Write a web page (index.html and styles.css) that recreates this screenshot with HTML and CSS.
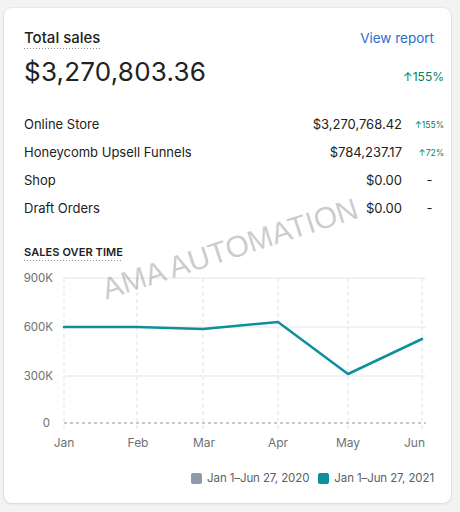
FILE: index.html
```html
<!DOCTYPE html>
<html>
<head>
<meta charset="utf-8">
<link rel="stylesheet" href="styles.css">
</head>
<body>
<div class="card">
  <div class="header">
    <span class="title dotted">Total sales</span>
    <a class="link">View report</a>
  </div>
  <div class="total">
    <span class="amount">$3,270,803.36</span>
    <span class="change big">↑155%</span>
  </div>
  <div class="rows">
    <div class="row"><span class="label">Online Store</span><span class="value">$3,270,768.42</span><span class="change small">↑155%</span></div>
    <div class="row"><span class="label">Honeycomb Upsell Funnels</span><span class="value">$784,237.17</span><span class="change small">↑72%</span></div>
    <div class="row"><span class="label">Shop</span><span class="value">$0.00</span><span class="dash">-</span></div>
    <div class="row"><span class="label">Draft Orders</span><span class="value">$0.00</span><span class="dash">-</span></div>
  </div>
  <div class="section"><span class="section-title dotted">SALES OVER TIME</span></div>
  <svg class="chart" width="428" height="200" viewBox="16 258 428 200">
    <g class="hgrid">
      <line x1="64" y1="277" x2="426" y2="277"/>
      <line x1="64" y1="326" x2="426" y2="326"/>
      <line x1="64" y1="375" x2="426" y2="375"/>
    </g>
    <g class="vgrid">
      <line x1="64" y1="277" x2="64" y2="428"/>
      <line x1="137" y1="277" x2="137" y2="428"/>
      <line x1="203" y1="277" x2="203" y2="428"/>
      <line x1="278" y1="277" x2="278" y2="428"/>
      <line x1="348" y1="277" x2="348" y2="428"/>
      <line x1="422" y1="277" x2="422" y2="428"/>
    </g>
    <line class="zero" x1="64" y1="422" x2="426" y2="422"/>
    <g class="ylab">
      <text x="53" y="278">900K</text>
      <text x="53" y="327">600K</text>
      <text x="53" y="376">300K</text>
      <text x="50" y="423">0</text>
    </g>
    <g class="xlab">
      <text x="64" y="443">Jan</text>
      <text x="138" y="443">Feb</text>
      <text x="204" y="443">Mar</text>
      <text x="278" y="443">Apr</text>
      <text x="348" y="443">May</text>
      <text x="425" y="443" class="end">Jun</text>
    </g>
    <polyline class="series" points="64,326 137,326 170,327 203,328 278,321 348,373 422,338"/>
  </svg>
  <div class="legend">
    <span class="swatch gray"></span><span class="ltext">Jan 1–Jun 27, 2020</span>
    <span class="swatch teal"></span><span class="ltext">Jan 1–Jun 27, 2021</span>
  </div>
  <div class="watermark">AMA AUTOMATION</div>
</div>
</body>
</html>
```

FILE: styles.css
```css
* { box-sizing: border-box; }
html, body {
  margin: 0;
  padding: 0;
  background: #f3f3f4;
}
body {
  font-family: Inter, "Noto Sans", sans-serif;
  color: #202223;
  width: 460px;
  height: 512px;
  overflow: hidden;
}
.card {
  position: relative;
  margin: 8px 0 0 4px;
  width: 447px;
  height: 495px;
  background: #fff;
  border-radius: 8px;
  box-shadow: 0 0 0 1px rgba(63,63,68,0.04), 0 1px 3px rgba(63,63,68,0.12);
  padding: 20px 7px 0 20px;
  overflow: hidden;
}
.dotted {
  display: inline-block;
  background-image: linear-gradient(to right, #8c9196 1px, transparent 1px);
  background-size: 3px 1px;
  background-repeat: repeat-x;
  background-position: left bottom;
}
.header {
  display: flex;
  justify-content: space-between;
  align-items: flex-start;
  height: 28px;
}
.title {
  font-size: 15px;
  font-weight: 500;
  line-height: 18px;
  padding-top: 1px;
  padding-bottom: 2px;
}
.link {
  color: #2c6ecb;
  font-size: 13.5px;
  line-height: 20px;
  margin-right: 10px;
  text-decoration: none;
}
.total {
  display: flex;
  justify-content: space-between;
  align-items: center;
  height: 32px;
}
.amount {
  font-size: 26px;
  line-height: 32px;
  font-weight: 400;
  letter-spacing: 0.2px;
}
.change {
  color: #007f5f;
}
.change.big {
  font-size: 12px;
  padding-top: 8px;
}
.rows {
  margin-top: 22px;
}
.row {
  display: grid;
  grid-template-columns: 1fr auto 30px;
  column-gap: 12px;
  align-items: center;
  height: 28px;
  font-size: 13px;
}
.value {
  text-align: right;
}
.change.small {
  font-size: 8.5px;
  text-align: right;
  padding-top: 1px;
}
.dash {
  text-align: center;
  padding-left: 1px;
}
.section {
  margin-top: 18px;
  height: 16px;
}
.section-title {
  font-size: 11px;
  font-weight: 600;
  line-height: 14px;
  padding-bottom: 2px;
  letter-spacing: 0.1px;
}
.chart {
  display: block;
  margin-top: 3px;
  margin-left: -8px;
  overflow: visible;
}
.hgrid line {
  stroke: #e4e5e7;
  stroke-width: 1;
}
.vgrid line {
  stroke: #dfe1e4;
  stroke-width: 1;
  stroke-dasharray: 4 3;
}
.zero {
  stroke: #8e94aa;
  stroke-width: 1.2;
  stroke-dasharray: 3 3;
}
.ylab text {
  font-family: Inter, "Noto Sans", sans-serif;
  font-size: 11.5px;
  fill: #6d7175;
  text-anchor: end;
  dominant-baseline: middle;
}
.xlab text {
  font-family: Inter, "Noto Sans", sans-serif;
  font-size: 12px;
  fill: #6d7175;
  text-anchor: middle;
  dominant-baseline: middle;
}
.xlab text.end {
  text-anchor: end;
}
.series {
  fill: none;
  stroke: #0f8f9c;
  stroke-width: 2.5;
  stroke-linejoin: round;
  stroke-linecap: round;
}
.legend {
  display: flex;
  justify-content: flex-end;
  align-items: center;
  margin-top: 11px;
  margin-right: 10px;
  height: 16px;
  font-size: 11.5px;
  color: #5c5f62;
}
.swatch {
  width: 11px;
  height: 11px;
  border-radius: 2px;
  margin-right: 5px;
}
.swatch.gray { background: #8e99aa; }
.swatch.teal { background: #0f8f9c; }
.ltext { margin-right: 9px; letter-spacing: -0.1px; }
.ltext:last-child { margin-right: 0; }
.watermark {
  position: absolute;
  left: 226px;
  top: 241px;
  transform: translate(-50%, -50%) rotate(-18deg);
  font-family: "Liberation Sans", Arial, sans-serif;
  font-size: 30px;
  line-height: 30px;
  white-space: nowrap;
  color: rgba(120, 120, 120, 0.38);
  pointer-events: none;
}
```
